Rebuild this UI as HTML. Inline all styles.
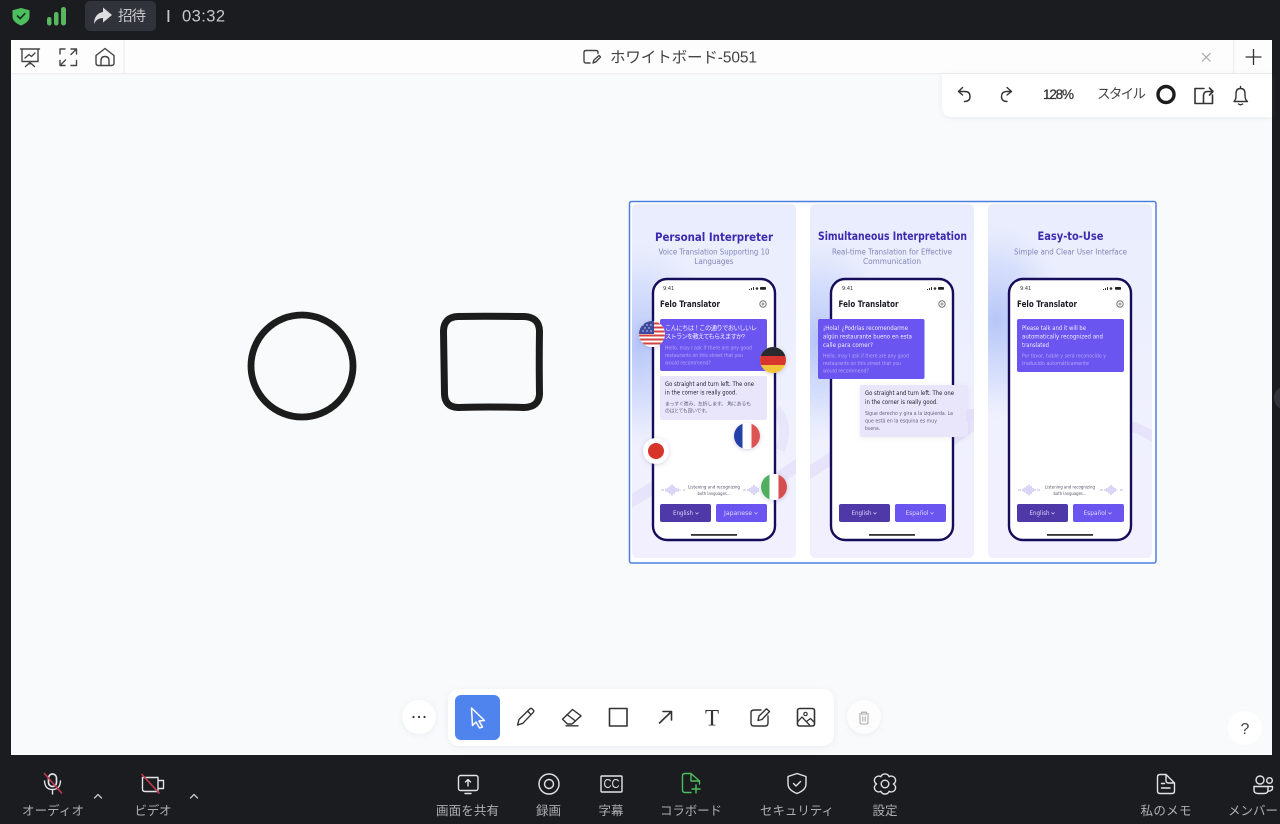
<!DOCTYPE html>
<html lang="ja"><head><meta charset="utf-8"><title>ホワイトボード-5051</title>
<style>
html,body{margin:0;padding:0;background:#1b1c20;width:1280px;height:824px;overflow:hidden}
svg{display:block}
text{font-family:"Liberation Sans","Noto Sans CJK JP",sans-serif}
.d{font-family:"DejaVu Sans","Noto Sans CJK JP",sans-serif}
.l{font-size:12.5px;fill:#aeafb2;text-anchor:middle}
.i{fill:none;stroke:#e2e3e5;stroke-width:1.4;stroke-linecap:round;stroke-linejoin:round}
.h{fill:none;stroke:#444;stroke-width:1.4;stroke-linecap:round;stroke-linejoin:round}
.t{fill:none;stroke:#333;stroke-width:1.6;stroke-linecap:round;stroke-linejoin:round}
.ti{font-size:11.5px;font-weight:700;fill:#3c2bb0;text-anchor:middle}
.su{font-size:7.6px;fill:#8384b8;text-anchor:middle}
.fe{font-size:9.2px;font-weight:700;fill:#1c1c28}
.ck{font-size:5px;fill:#333}
.w1{font-size:6.3px;fill:#f0edff}
.w2{font-size:4.8px;fill:#b5a9f8}
.b1{font-size:6.3px;fill:#22222e}
.b2{font-size:4.9px;fill:#62627a}
.ls{font-size:4.7px;fill:#55556a;text-anchor:middle}
.bt{font-size:5.9px;fill:#ddd8fb;text-anchor:middle}
</style></head><body>
<svg width="1280" height="824" viewBox="0 0 1280 824" xmlns="http://www.w3.org/2000/svg">
<defs>
<linearGradient id="cg" x1="0" y1="0" x2="0" y2="1"><stop offset="0" stop-color="#e9edfd"/><stop offset=".25" stop-color="#ebeefd"/><stop offset=".6" stop-color="#f0f1fe"/><stop offset="1" stop-color="#f2f0fe"/></linearGradient>
<radialGradient id="bl"><stop offset="0" stop-color="#b6c5f8"/><stop offset=".6" stop-color="#cad6fa" stop-opacity=".6"/><stop offset="1" stop-color="#dfe5fc" stop-opacity="0"/></radialGradient>
<clipPath id="c1"><rect x="632" y="204" width="164" height="354" rx="5"/></clipPath>
<clipPath id="c2"><rect x="810" y="204" width="164" height="354" rx="5"/></clipPath>
<clipPath id="c3"><rect x="988" y="204" width="164" height="354" rx="5"/></clipPath>
<clipPath id="us"><circle cx="652" cy="334" r="13"/></clipPath>
<clipPath id="de"><circle cx="773" cy="360" r="13"/></clipPath>
<clipPath id="fr"><circle cx="747" cy="436" r="13"/></clipPath>
<clipPath id="it"><circle cx="774" cy="487" r="13"/></clipPath>
<filter id="sf" x="-20%" y="-20%" width="140%" height="140%"><feGaussianBlur stdDeviation=".3"/></filter>
<filter id="sh" x="-40%" y="-40%" width="180%" height="180%"><feDropShadow dx="0" dy="1" stdDeviation="2" flood-color="#5a5a90" flood-opacity=".28"/></filter>
<filter id="ps" x="-10%" y="-30%" width="120%" height="160%"><feDropShadow dx="0" dy="1" stdDeviation="3" flood-color="#889" flood-opacity=".14"/></filter>
</defs>

<rect width="1280" height="824" fill="#1b1c20"/>

<!-- top bar -->
<path d="M21 8l8.5 2.2v6c0 4.5-3.6 7.300-8.500 9.300-4.900-2-8.500-4.800-8.500-9.300v-6z" fill="#4cc05f"/>
<path d="M17.500 16l2.700 2.600 4.600-4.900" fill="none" stroke="#16351f" stroke-width="1.700" stroke-linecap="round" stroke-linejoin="round"/>
<rect x="47" y="17" width="4.500" height="8.500" rx="2.200" fill="#58b860"/>
<rect x="54" y="12" width="4.500" height="13.500" rx="2.200" fill="#58b860"/>
<rect x="61" y="7" width="5" height="18.500" rx="2.400" fill="#58b860"/>
<rect x="85" y="1" width="71" height="30" rx="5" fill="#31333b"/>
<path d="M103 7.500l9 7.500-9 7.500v-4.500c-4 0-7 1.800-9 6 0-6.500 3-11 9-12z" fill="#dcdde0"/>
<text x="118" y="21" font-size="14.500" fill="#c5c6c9" textLength="28">招待</text>
<rect x="167.500" y="10" width="1.800" height="12" fill="#c5c6c9"/>
<text x="182" y="21.500" font-size="16.500" fill="#c5c6c9" textLength="43">03:32</text>

<!-- main -->
<rect x="11" y="40" width="1261" height="715" fill="#f9fafc"/>
<rect x="11" y="40" width="1261" height="33" fill="#fdfdfd"/>
<rect x="11" y="73" width="1261" height="1.300" fill="#eeeeef"/>
<rect x="123.500" y="40" width="1.300" height="33" fill="#eeeeef"/>
<rect x="1233" y="40" width="1.300" height="33" fill="#eeeeef"/>

<g class="h">
<path d="M20.500 49H39.500M22 49V61.500H38V49M30 61.500V64M25.500 66.500L30 62.500L34.500 66.500M25 58L29 54.500L31.500 56.500L35 53"/>
<path d="M60 54V49H65M71 49H76.500V54M60 60.500V65.500H65M71 65.500H76.500V60.500M71 54.500L76 49.500M60.500 65L65.500 60"/>
<path d="M96 55.500L105 48.500L114 55.500V63Q114 65.500 111.500 65.500H98.500Q96 65.500 96 63ZM101 65.500V60.500Q101 56.500 105 56.500Q109 56.500 109 60.500V65.500"/>
<path d="M598 53.500V52.500Q598 50.500 596 50.500H586Q584 50.500 584 52.500V61Q584 63 586 63H590M593 63L594 60L599 55.500L600.500 57L596 61.800Z"/>
</g>
<text x="610" y="62.500" font-size="15.500" fill="#444" textLength="147">ホワイトボード-5051</text>
<path d="M1202 53L1210.500 61.500M1210.500 53L1202 61.500" stroke="#a8a8aa" stroke-width="1.200"/>
<path d="M1253.500 49V65M1245.500 57H1261.500" stroke="#333" stroke-width="1.300"/>

<!-- style panel -->
<path d="M942 74H1272V117H952Q942 117 942 107Z" fill="#fff" filter="url(#ps)"/>
<g class="h" style="stroke:#333">
<path d="M962.500 87.500L958.500 91.500L962.500 95M958.500 91.500H965Q970 91.500 970 96.500Q970 101.500 964.500 101.500"/>
<path d="M1007 87.500L1011.500 91.500L1007 95M1011.500 91.500H1006Q1001.500 92 1001.500 96.500Q1001.500 101.500 1007 101.500"/>
<path d="M1204 88.500H1195V103.500H1212.500V95M1203.500 103V95.500Q1203.500 91.500 1207.500 91.500H1212.500M1209.500 88L1213 91.500L1209.500 95" stroke-width="1.600"/>
<path d="M1234 101.500Q1236 99.500 1236 96V93.500Q1236 88.500 1240.500 88.500Q1245 88.500 1245 93.500V96Q1245 99.500 1247.500 101.500ZM1238.500 104Q1240.500 105.500 1242.500 104M1240.500 86.500V88.500"/>
</g>
<text x="1043" y="99" font-size="13.500" fill="#333" stroke="#333" stroke-width=".25" textLength="31">128%</text>
<text x="1097" y="98.500" font-size="13.500" fill="#444" textLength="49">スタイル</text>
<circle cx="1166" cy="94.500" r="8" fill="none" stroke="#1c1c1c" stroke-width="3.400"/>

<!-- shapes -->
<circle cx="302" cy="366" r="51" fill="none" stroke="#1c1c1c" stroke-width="6.800"/>
<path d="M458 316.500Q478 316 524 316.500Q539 317 539.500 331Q539 360 539.500 394Q539 407 524 407.500Q490 406.500 458 407.500Q445 407 444.500 394Q444 360 443.500 331Q444 317 458 316.500Z" fill="none" stroke="#1c1c1c" stroke-width="7"/>

<!-- selection image -->
<rect x="629.500" y="201.500" width="526.500" height="361.500" rx="2" fill="#fff" stroke="#4f7fe0" stroke-width="1.500"/>
<g filter="url(#sf)">
<!-- card 1 -->
<g clip-path="url(#c1)">
<rect x="632" y="204" width="164" height="354" fill="url(#cg)"/>
<ellipse cx="640" cy="345" rx="75" ry="105" fill="url(#bl)"/>
<path d="M625 505L690 465M770 484L805 460" stroke="#e6e3fb" stroke-width="12" fill="none"/>
<path d="M776 410Q790 425 780 450" stroke="#e8e6fb" stroke-width="10" fill="none"/>
</g>
<text class="ti d" x="714" y="241" textLength="118" lengthAdjust="spacingAndGlyphs">Personal Interpreter</text>
<text class="su d" x="714" y="254.500" textLength="111" lengthAdjust="spacingAndGlyphs">Voice Translation Supporting 10</text>
<text class="su d" x="714" y="264" textLength="39" lengthAdjust="spacingAndGlyphs">Languages</text>
<rect x="653" y="279" width="122" height="261" rx="14" fill="#fff" stroke="#150a5a" stroke-width="2.400"/>
<text class="ck d" x="663" y="290">9:41</text>
<path d="M749 290h1v-1h-1zM751 290h1v-2h-1zM753 290h1v-3h-1z" fill="#333"/><circle cx="757" cy="288.500" r="1.300" fill="#333"/><rect x="760" y="287" width="6" height="2.800" rx=".8" fill="#222"/>
<text class="fe d" x="660" y="307" textLength="60" lengthAdjust="spacingAndGlyphs">Felo Translator</text>
<circle cx="763" cy="304" r="3.200" fill="none" stroke="#777" stroke-width="1"/><circle cx="763" cy="304" r="1" fill="none" stroke="#777" stroke-width=".7"/>
<rect x="660" y="319" width="107" height="52" rx="2" fill="#6a55f0"/>
<text class="w1" x="665" y="330" textLength="92">こんにちは！この通りでおいしいレ</text>
<text class="w1" x="665" y="338.500" textLength="80">ストランを教えてもらえますか?</text>
<text class="w2 d" x="665" y="349.500" textLength="87" lengthAdjust="spacingAndGlyphs">Hello, may I ask if there are any good</text>
<text class="w2 d" x="665" y="357" textLength="78" lengthAdjust="spacingAndGlyphs">restaurants on this street that you</text>
<text class="w2 d" x="665" y="364.500" textLength="46" lengthAdjust="spacingAndGlyphs">would recommend?</text>
<rect x="660" y="376" width="107" height="44" rx="2" fill="#e9e6fb"/>
<text class="b1 d" x="665" y="386" textLength="89" lengthAdjust="spacingAndGlyphs">Go straight and turn left. The one</text>
<text class="b1 d" x="665" y="394.500" textLength="72" lengthAdjust="spacingAndGlyphs">in the corner is really good.</text>
<text class="b2" x="665" y="405.500" textLength="86">まっすぐ進み、左折します。 角にあるも</text>
<text class="b2" x="665" y="412.500" textLength="45">のはとても良いです。</text>
<g stroke="#c9bff2" stroke-width="1.300">
<path d="M661 490H664M666 488.500V491.500M668 487.500V492.500M670 486V494M672 484.500V495.500M674 486V494M676 488V492M678 488.500V491.500M680 489.500V490.500M683 490H685"/>
<path d="M743 490H746M748 489V491M750 488V492M752 486.500V493.500M754 485V495M756 486.500V493.500M758 488V492"/>
</g>
<text class="ls d" x="714" y="488.500" textLength="52" lengthAdjust="spacingAndGlyphs">Listening and recognizing</text>
<text class="ls d" x="714" y="495" textLength="33" lengthAdjust="spacingAndGlyphs">both languages...</text>
<rect x="660" y="504" width="51" height="18" rx="2" fill="#4f39a8"/>
<rect x="716" y="504" width="51" height="18" rx="2" fill="#6a55f0"/>
<text class="bt d" x="683" y="515" textLength="20" lengthAdjust="spacingAndGlyphs">English</text>
<path d="M695.500 512.500l1.500 1.500 1.500-1.500" fill="none" stroke="#ddd8fb" stroke-width=".7"/>
<text class="bt d" x="738" y="515" textLength="28" lengthAdjust="spacingAndGlyphs">Japanese</text>
<path d="M754.500 512.500l1.500 1.500 1.500-1.500" fill="none" stroke="#ddd8fb" stroke-width=".7"/>
<rect x="691" y="534" width="46" height="1.800" fill="#333"/>

<!-- flags -->
<circle cx="652" cy="334" r="13" fill="#fff" filter="url(#sh)"/>
<g clip-path="url(#us)">
<rect x="639" y="321" width="26" height="26" fill="#fff"/>
<g fill="#d2403f"><rect x="639" y="322.500" width="26" height="2"/><rect x="639" y="326.500" width="26" height="2"/><rect x="639" y="330.500" width="26" height="2"/><rect x="639" y="334.500" width="26" height="2"/><rect x="639" y="338.500" width="26" height="2"/><rect x="639" y="342.500" width="26" height="2"/></g>
<rect x="639" y="321" width="15" height="13" fill="#3c4a9c"/>
<g fill="#dfe2f5"><circle cx="643" cy="325" r=".7"/><circle cx="647" cy="325" r=".7"/><circle cx="651" cy="325" r=".7"/><circle cx="645" cy="328" r=".7"/><circle cx="649" cy="328" r=".7"/><circle cx="643" cy="331" r=".7"/><circle cx="647" cy="331" r=".7"/><circle cx="651" cy="331" r=".7"/></g>
</g>
<circle cx="773" cy="360" r="13" fill="#fff" filter="url(#sh)"/>
<g clip-path="url(#de)"><rect x="760" y="347" width="26" height="9" fill="#2b2b2e"/><rect x="760" y="356" width="26" height="9" fill="#d8362f"/><rect x="760" y="365" width="26" height="9" fill="#f2c43a"/></g>
<circle cx="656" cy="451" r="13" fill="#fff" filter="url(#sh)"/>
<circle cx="656" cy="451" r="8" fill="#d8362a"/>
<circle cx="747" cy="436" r="13" fill="#fff" filter="url(#sh)"/>
<g clip-path="url(#fr)"><rect x="734" y="423" width="8.500" height="26" fill="#2440a8"/><rect x="742.500" y="423" width="9" height="26" fill="#fff"/><rect x="751.500" y="423" width="8.500" height="26" fill="#dc5555"/></g>
<circle cx="774" cy="487" r="13" fill="#fff" filter="url(#sh)"/>
<g clip-path="url(#it)"><rect x="761" y="474" width="8.500" height="26" fill="#4fae5e"/><rect x="769.500" y="474" width="9" height="26" fill="#fff"/><rect x="778.500" y="474" width="8.500" height="26" fill="#d64f50"/></g>

<!-- card 2 -->
<g clip-path="url(#c2)">
<rect x="810" y="204" width="164" height="354" fill="url(#cg)"/>
<ellipse cx="818" cy="340" rx="75" ry="105" fill="url(#bl)"/>
<path d="M803 477L870 432M945 445L985 415" stroke="#e6e3fb" stroke-width="12" fill="none"/>
</g>
<text class="ti d" x="892.500" y="240" textLength="149" lengthAdjust="spacingAndGlyphs">Simultaneous Interpretation</text>
<text class="su d" x="892" y="254.500" textLength="120" lengthAdjust="spacingAndGlyphs">Real-time Translation for Effective</text>
<text class="su d" x="892" y="264" textLength="58" lengthAdjust="spacingAndGlyphs">Communication</text>
<rect x="831" y="279" width="122" height="261" rx="14" fill="#fff" stroke="#150a5a" stroke-width="2.400"/>
<text class="ck d" x="842" y="290">9:41</text>
<path d="M927 290h1v-1h-1zM929 290h1v-2h-1zM931 290h1v-3h-1z" fill="#333"/><circle cx="935" cy="288.500" r="1.300" fill="#333"/><rect x="938" y="287" width="6" height="2.800" rx=".8" fill="#222"/>
<text class="fe d" x="838.500" y="307" textLength="60" lengthAdjust="spacingAndGlyphs">Felo Translator</text>
<circle cx="942" cy="304" r="3.200" fill="none" stroke="#777" stroke-width="1"/><circle cx="942" cy="304" r="1" fill="none" stroke="#777" stroke-width=".7"/>
<rect x="818" y="319" width="106.500" height="60" rx="2" fill="#6a55f0"/>
<text class="w1 d" x="823" y="330" textLength="85" lengthAdjust="spacingAndGlyphs">¡Hola! ¿Podrías recomendarme</text>
<text class="w1 d" x="823" y="338.500" textLength="89" lengthAdjust="spacingAndGlyphs">algún restaurante bueno en esta</text>
<text class="w1 d" x="823" y="347" textLength="50" lengthAdjust="spacingAndGlyphs">calle para comer?</text>
<text class="w2 d" x="823" y="357.500" textLength="86" lengthAdjust="spacingAndGlyphs">Hello, may I ask if there are any good</text>
<text class="w2 d" x="823" y="365" textLength="78" lengthAdjust="spacingAndGlyphs">restaurants on this street that you</text>
<text class="w2 d" x="823" y="372.500" textLength="46" lengthAdjust="spacingAndGlyphs">would recommend?</text>
<rect x="860" y="385" width="108" height="52" rx="2" fill="#e9e6fb" filter="url(#ps)"/>
<rect x="966" y="409" width="8" height="13" fill="#e2e0f8"/>
<text class="b1 d" x="865" y="395" textLength="89" lengthAdjust="spacingAndGlyphs">Go straight and turn left. The one</text>
<text class="b1 d" x="865" y="404" textLength="73" lengthAdjust="spacingAndGlyphs">in the corner is really good.</text>
<text class="b2 d" x="865" y="415" textLength="88" lengthAdjust="spacingAndGlyphs">Sigue derecho y gira a la izquierda. La</text>
<text class="b2 d" x="865" y="422.500" textLength="72" lengthAdjust="spacingAndGlyphs">que está en la esquina es muy</text>
<text class="b2 d" x="865" y="430" textLength="15" lengthAdjust="spacingAndGlyphs">buena.</text>
<rect x="839" y="504" width="51" height="18" rx="2" fill="#4f39a8"/>
<rect x="895" y="504" width="51" height="18" rx="2" fill="#6a55f0"/>
<text class="bt d" x="861.500" y="515" textLength="20" lengthAdjust="spacingAndGlyphs">English</text>
<path d="M873.500 512.500l1.500 1.500 1.500-1.500" fill="none" stroke="#ddd8fb" stroke-width=".7"/>
<text class="bt d" x="917" y="515" textLength="23" lengthAdjust="spacingAndGlyphs">Español</text>
<path d="M930.500 512.500l1.500 1.500 1.500-1.500" fill="none" stroke="#ddd8fb" stroke-width=".7"/>
<rect x="869" y="534" width="46" height="1.800" fill="#333"/>

<!-- card 3 -->
<g clip-path="url(#c3)">
<rect x="988" y="204" width="164" height="354" fill="url(#cg)"/>
<ellipse cx="996" cy="320" rx="70" ry="100" fill="url(#bl)"/>
<path d="M1125 425Q1142 428 1160 442" stroke="#e6e3fb" stroke-width="10" fill="none"/>
</g>
<text class="ti d" x="1070.500" y="240" textLength="66" lengthAdjust="spacingAndGlyphs">Easy-to-Use</text>
<text class="su d" x="1070.500" y="254.500" textLength="113" lengthAdjust="spacingAndGlyphs">Simple and Clear User Interface</text>
<rect x="1009" y="279" width="122" height="261" rx="14" fill="#fff" stroke="#150a5a" stroke-width="2.400"/>
<text class="ck d" x="1020" y="290">9:41</text>
<path d="M1103 290h1v-1h-1zM1105 290h1v-2h-1zM1107 290h1v-3h-1z" fill="#333"/><circle cx="1111" cy="288.500" r="1.300" fill="#333"/><rect x="1115" y="287" width="6" height="2.800" rx=".8" fill="#222"/>
<text class="fe d" x="1017" y="307" textLength="60" lengthAdjust="spacingAndGlyphs">Felo Translator</text>
<circle cx="1120" cy="304" r="3.200" fill="none" stroke="#777" stroke-width="1"/><circle cx="1120" cy="304" r="1" fill="none" stroke="#777" stroke-width=".7"/>
<rect x="1017" y="319" width="107" height="53" rx="2" fill="#6a55f0"/>
<text class="w1 d" x="1022" y="330" textLength="64" lengthAdjust="spacingAndGlyphs">Please talk and it will be</text>
<text class="w1 d" x="1022" y="338.500" textLength="81" lengthAdjust="spacingAndGlyphs">automatically recognized and</text>
<text class="w1 d" x="1022" y="347" textLength="27" lengthAdjust="spacingAndGlyphs">translated</text>
<text class="w2 d" x="1022" y="357.500" textLength="84" lengthAdjust="spacingAndGlyphs">Por favor, hable y será reconocido y</text>
<text class="w2 d" x="1022" y="365" textLength="67" lengthAdjust="spacingAndGlyphs">traducido automáticamente</text>
<g stroke="#c9bff2" stroke-width="1.300">
<path d="M1018 490H1021M1023 488.500V491.500M1025 487.500V492.500M1027 486V494M1029 484.500V495.500M1031 486V494M1033 488V492M1035 489V491M1037 490H1040"/>
<path d="M1100 490H1103M1105 489V491M1107 488V492M1109 486.500V493.500M1111 485V495M1113 486.500V493.500M1115 488V492M1117 489.500V490.500M1120 490H1123"/>
</g>
<text class="ls d" x="1070" y="488.500" textLength="50" lengthAdjust="spacingAndGlyphs">Listening and recognizing</text>
<text class="ls d" x="1070" y="495" textLength="33" lengthAdjust="spacingAndGlyphs">both languages...</text>
<rect x="1017" y="504" width="51" height="18" rx="2" fill="#4f39a8"/>
<rect x="1073" y="504" width="51" height="18" rx="2" fill="#6a55f0"/>
<text class="bt d" x="1039.500" y="515" textLength="20" lengthAdjust="spacingAndGlyphs">English</text>
<path d="M1051.500 512.500l1.500 1.500 1.500-1.500" fill="none" stroke="#ddd8fb" stroke-width=".7"/>
<text class="bt d" x="1095" y="515" textLength="23" lengthAdjust="spacingAndGlyphs">Español</text>
<path d="M1108.500 512.500l1.500 1.500 1.500-1.500" fill="none" stroke="#ddd8fb" stroke-width=".7"/>
<rect x="1047" y="534" width="46" height="1.800" fill="#333"/>
</g>

<!-- toolbar -->
<circle cx="419" cy="717" r="17" fill="#fff" filter="url(#ps)"/>
<circle cx="413.500" cy="717" r="1.100" fill="#333"/><circle cx="419" cy="717" r="1.100" fill="#333"/><circle cx="424.500" cy="717" r="1.100" fill="#333"/>
<rect x="448" y="689" width="386" height="57" rx="11" fill="#fff" filter="url(#ps)"/>
<rect x="455" y="695" width="45" height="45" rx="6" fill="#4f83ee"/>
<path d="M471.500 708L484.500 720.500L479 721L482.500 727L479.500 728L476 722L472.500 725.500Z" fill="none" stroke="#fff" stroke-width="1.500" stroke-linejoin="round"/>
<g class="t">
<path d="M517.500 725L519 719.500L530 708.800Q531 708 532 708.800L533.500 710.300Q534.200 711.300 533.300 712.300L522.800 723.300ZM527.500 711L531 714.700" stroke-width="1.400"/>
<path d="M572.500 709.500L581 715.800L572 724H567.500L562.500 719.200ZM567 714.500L575.500 721M566 725.800H578" stroke-width="1.400"/>
<rect x="609.500" y="708.500" width="17.500" height="17.500"/>
<path d="M659.500 723L671.500 711.500M663 711.500H671.500V720"/>
<path d="M761 710H754Q751 710 751 713V723Q751 726 754 726H765Q768 726 768 723V716M758 720.500L759 716L766.500 708.800L769.500 711.500L762 719.500Z" stroke-width="1.400"/>
<rect x="797.500" y="708.500" width="17" height="17.500" rx="2"/>
<circle cx="805.500" cy="714" r="1.700" stroke-width="1.200"/>
<path d="M797.500 722L802 717L809.500 725M806.500 721.500L810.500 718.500L814.500 722.500" stroke-width="1.300"/>
</g>
<text x="712" y="725.500" font-size="23" fill="#333" text-anchor="middle" style='font-family:"Liberation Serif",serif'>T</text>
<circle cx="864" cy="717" r="17" fill="#fdfdfe" filter="url(#ps)"/>
<path d="M860 715V722.500Q860 724 861.500 724H866.500Q868 724 868 722.500V715M858.800 714H869.200M861.500 714V712.200H866.500V714M862.800 716.500V721.500M865.200 716.500V721.500" fill="none" stroke="#a8a8aa" stroke-width="1.100"/>
<circle cx="1245" cy="728" r="17" fill="#fff"/>
<text x="1245" y="734" font-size="16" fill="#444" text-anchor="middle">?</text>

<!-- right handle -->
<circle cx="1286" cy="398" r="12" fill="#33353b"/>

<!-- bottom bar -->
<rect x="0" y="755" width="1280" height="69" fill="#1b1c20"/>
<g class="i">
<rect x="48.500" y="774" width="8" height="12.500" rx="4" stroke-width="1.700"/>
<path d="M44.500 781Q45 789.500 52.500 789.500Q60 789.500 60.500 781M52.500 789.500V794"/>
<path d="M142.500 777.500H158V791.500H145Q142.500 791.500 142.500 789ZM158.500 780.500H163.500V788.500H158.500" />
<path d="M94.500 798L98 794.500L101.500 798M190.500 798L194 794.500L197.500 798" stroke="#c5c6c9"/>
<rect x="458.500" y="775.500" width="19.500" height="15" rx="2"/>
<path d="M468 786V780M465.500 782L468 779.500L470.500 782M465 793.500H471" />
<circle cx="549" cy="784" r="10"/><circle cx="549" cy="784" r="4.500"/>
<rect x="601" y="776" width="21" height="16" rx="1"/>
<path d="M797 773.500L806 776.500V784Q806 790 797 793.500Q788 790 788 784V776.500ZM793.500 783.500L796 786L800.500 781.500"/>
<path d="M893.500 784A4.200 4.200 0 0 0 889.200 776.700A4.600 4.600 0 0 0 880.800 776.700A4.200 4.200 0 0 0 876.500 784A4.200 4.200 0 0 0 880.800 791.300A4.600 4.600 0 0 0 889.200 791.300A4.200 4.200 0 0 0 893.500 784Z"/>
<circle cx="885" cy="784" r="3.800"/>
<path d="M1166 774.500H1160Q1157.500 774.500 1157.500 777V791Q1157.500 793.500 1160 793.500H1172Q1174.500 793.500 1174.500 791V783ZM1166 774.500V780.500Q1166 783 1168.500 783H1174.500M1161.500 783.500H1164.500M1161.500 788H1170"/>
<circle cx="1260" cy="780" r="4"/><circle cx="1269.500" cy="780.500" r="2.800"/>
<path d="M1254 786.500H1268V790Q1268 793.500 1264 793.500H1258Q1254 793.500 1254 790ZM1268 786.500H1272.500V788Q1272.500 791 1268.500 791"/>
</g>
<path d="M44 773L62 793.500" stroke="#c23a4d" stroke-width="1.600"/>
<path d="M141.500 774L159.500 793.500" stroke="#c23a4d" stroke-width="1.600"/>
<text x="611.500" y="788" font-size="13" fill="#e2e3e5" text-anchor="middle" textLength="16" lengthAdjust="spacingAndGlyphs">CC</text>
<path d="M691 773.500H685Q682.500 773.500 682.500 776V790Q682.500 792.500 685 792.500H691M691 773.500L699.500 781V784M691 773.500V781H699.500M696 785V793M692 789H700" fill="none" stroke="#4cc05f" stroke-width="1.400" stroke-linecap="round" stroke-linejoin="round"/>

<text class="l" x="53" y="815" textLength="62">オーディオ</text>
<text class="l" x="153" y="815" textLength="37">ビデオ</text>
<text class="l" x="467.500" y="815" textLength="63">画面を共有</text>
<text class="l" x="548.500" y="815" textLength="25">録画</text>
<text class="l" x="611" y="815" textLength="25">字幕</text>
<text class="l" x="691" y="815" textLength="62">コラボード</text>
<text class="l" x="797" y="815" textLength="74">セキュリティ</text>
<text class="l" x="885" y="815" textLength="25">設定</text>
<text class="l" x="1166" y="815" textLength="51">私のメモ</text>
<text x="1228" y="815" font-size="12.500" fill="#aeafb2" textLength="50">メンバー</text>
</svg>
</body></html>
